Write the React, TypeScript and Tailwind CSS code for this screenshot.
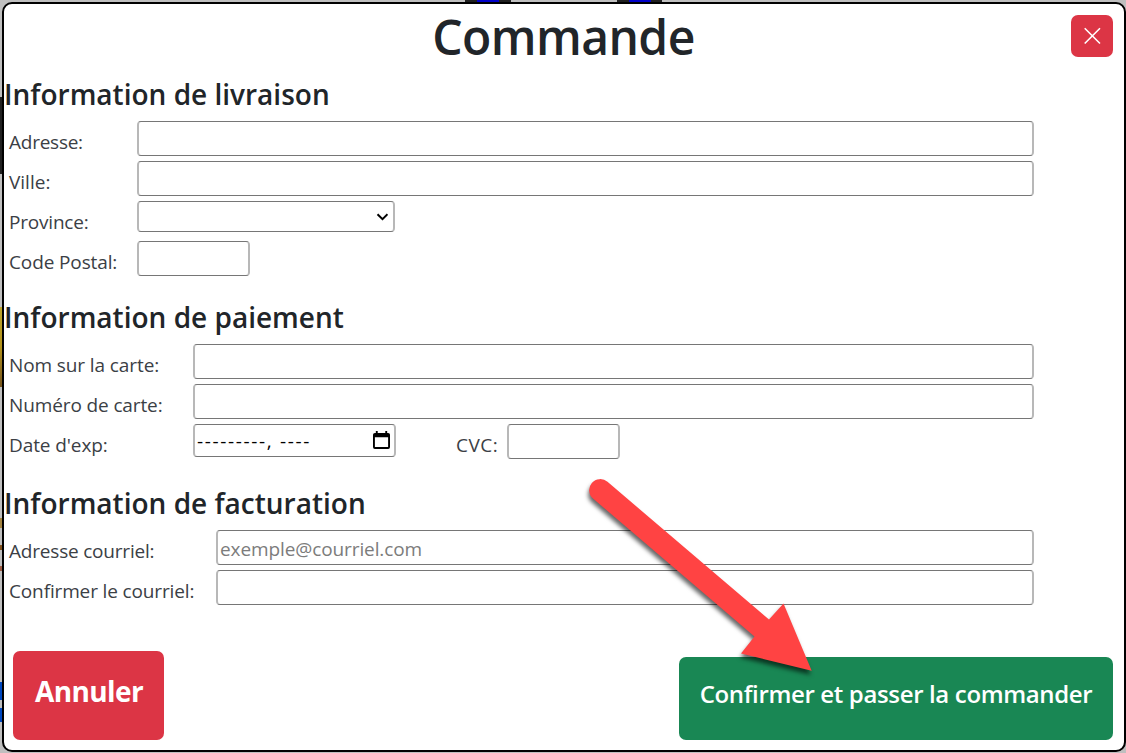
import type { ReactNode } from "react";

const inputBox =
  "h-[35px] rounded-[4px] border border-x-2 border-[#767676] border-x-[#b8b8b8] bg-white px-[2px] outline-none";

function Section({ title, children, className }: { title: string; children: ReactNode; className: string }) {
  return (
    <section className={className}>
      <h2 className="h-[44px] text-[28px] font-semibold leading-[34px] whitespace-nowrap">{title}</h2>
      {children}
    </section>
  );
}

function Row({ label, labelWidth, spacing, children }: { label: string; labelWidth: string; spacing: string; children: ReactNode }) {
  return (
    <div className="flex h-[40px] items-start">
      <label className={`shrink-0 pl-[5px] pt-[7px] text-[19px] leading-[28px] whitespace-nowrap text-[#3b4045] ${labelWidth}`}>
        <span className={spacing}>{label}</span>
      </label>
      {children}
    </div>
  );
}

export default function App() {
  return (
    <div className="relative flex h-[753px] w-[1126px] overflow-hidden bg-[#bfbfbf] pt-[2px] pb-[1px] pl-[2px] font-['Open_Sans','Noto_Sans',sans-serif] text-[#212529]">
      <div className="absolute top-0 left-[465px] flex h-[2px] w-[46px] justify-center bg-[#202020]">
        <div className="w-[22px] bg-[#0000c8]" />
      </div>
      <div className="absolute top-0 left-[617px] flex h-[2px] w-[45px] justify-center bg-[#202020]">
        <div className="w-[22px] bg-[#0000c8]" />
      </div>
      <div className="absolute top-[97px] left-0 h-[77px] w-[2px] bg-[#202020]" />
      <div className="absolute top-[307px] left-0 h-[80px] w-[2px] bg-linear-to-b from-[#bda52c] via-[#b4931b] to-[#76551c]" />
      <div className="absolute top-[518px] left-0 h-[10px] w-[2px] bg-[#a48440]" />
      <div className="absolute top-[545px] left-0 h-[5px] w-[2px] bg-[#80501c]" />
      <div className="absolute top-[566px] left-0 h-[5px] w-[2px] bg-[#9c5b43]" />
      <div className="absolute top-[682px] left-0 h-[18px] w-[2px] bg-[#0047bf]" />
      <div className="absolute top-[708px] left-0 h-[14px] w-[2px] bg-[#0047bf]" />

      <main className="relative flex h-[750px] w-[1124px] flex-col rounded-[10px] border-2 border-black bg-white">
        <header className="flex h-[74px] justify-center">
          <h1 className="pt-[3px] pr-[1px] text-[48px] leading-[60px] font-semibold tracking-[-0.6px] whitespace-nowrap">
            Commande
          </h1>
          <button aria-label="Fermer" className="absolute top-[11px] right-[11px] flex size-[42px] items-center justify-center rounded-[7px] bg-[#dc3545]">
            <svg width="18" height="18" viewBox="0 0 18 18" fill="none" stroke="white" strokeWidth="1.6">
              <path d="M1.7 1.2 17 16.5M17 1.2 1.7 16.5" />
            </svg>
          </button>
        </header>

        <Section title="Information de livraison" className="-mt-[1px] h-[223px]">
          <Row label="Adresse:" labelWidth="w-[133px]" spacing="tracking-[-0.25px]">
            <input className={`${inputBox} w-[897px]`} />
          </Row>
          <Row label="Ville:" labelWidth="w-[133px]" spacing="">
            <input className={`${inputBox} w-[897px]`} />
          </Row>
          <Row label="Province:" labelWidth="w-[133px]" spacing="tracking-[-0.2px]">
            <div className="flex h-[31px] w-[258px] items-center justify-end rounded-[4px] border border-x-2 border-[#767676] border-x-[#b8b8b8] pr-[5px]">
              <svg width="12" height="8" viewBox="0 0 12 8" fill="none" stroke="black" strokeWidth="2">
                <path d="m1.5 1.2 5 5 5-5" />
              </svg>
            </div>
          </Row>
          <Row label="Code Postal:" labelWidth="w-[133px]" spacing="tracking-[-0.12px]">
            <input className={`${inputBox} w-[113px]`} />
          </Row>
        </Section>

        <Section title="Information de paiement" className="h-[186px]">
          <Row label="Nom sur la carte:" labelWidth="w-[189px]" spacing="tracking-[-0.1px]">
            <input className={`${inputBox} w-[841px]`} />
          </Row>
          <Row label="Numéro de carte:" labelWidth="w-[189px]" spacing="tracking-[-0.12px]">
            <input className={`${inputBox} w-[841px]`} />
          </Row>
          <Row label="Date d'exp:" labelWidth="w-[189px]" spacing="tracking-[-0.1px]">
            <div className="flex h-[33px] w-[203px] items-center justify-between rounded-[4px] border border-x-2 border-[#767676] border-x-[#b8b8b8] pr-[4px] pl-[2px] text-[19px] text-black">
              <span className="pt-[1px] tracking-[1.65px] whitespace-nowrap">---------, ----</span>
              <svg className="-mt-[1px]" width="17" height="18" viewBox="0 0 18 19">
                <path fill="black" fillRule="evenodd" d="M3 0h2v2h8V0h2v2h1q2 0 2 2v13q0 2-2 2H2q-2 0-2-2V4q0-2 2-2h1zM2 6.5v10.5h14V6.5z" />
              </svg>
            </div>
            <label className="w-[111px] pt-[7px] pl-[60px] text-[19px] leading-[28px] text-[#3b4045]">
              <span className="tracking-[0.5px]">CVC:</span>
            </label>
            <input className={`${inputBox} w-[113px]`} />
          </Row>
        </Section>

        <Section title="Information de facturation" className="h-[165px]">
          <Row label="Adresse courriel:" labelWidth="w-[212px]" spacing="tracking-[-0.2px]">
            <input placeholder="exemple@courriel.com" className={`${inputBox} w-[818px] pt-[2px] text-[19px] tracking-[-0.1px] placeholder:text-[#7c7c7c]`} />
          </Row>
          <Row label="Confirmer le courriel:" labelWidth="w-[212px]" spacing="tracking-[-0.14px]">
            <input className={`${inputBox} w-[818px]`} />
          </Row>
        </Section>

        <footer className="flex h-[89px] items-end justify-between pr-[11px] pl-[9px]">
          <button className="h-[89px] w-[151px] rounded-[7px] bg-[#dc3545] pb-[10px] pl-[1px] text-[28px] font-bold tracking-[-0.6px] text-white">
            Annuler
          </button>
          <button className="h-[83px] w-[434px] rounded-[7px] bg-[#198754] pb-[10px] text-[24px] font-semibold tracking-[-0.35px] whitespace-nowrap text-white">
            Confirmer et passer la commander
          </button>
        </footer>
      </main>

      <svg className="pointer-events-none absolute top-[470px] left-[580px] drop-shadow-[-1px_4px_2px_rgba(0,0,0,0.6)]" width="245" height="215" viewBox="580 470 245 215">
        <path fill="#ff4343" d="M607.5 481.8 769 619.5 783.5 603.5 811.7 670.8 741 653.5 754.5 636.5 593 498.6A11 11 0 0 1 607.5 481.8Z" />
      </svg>
    </div>
  );
}
